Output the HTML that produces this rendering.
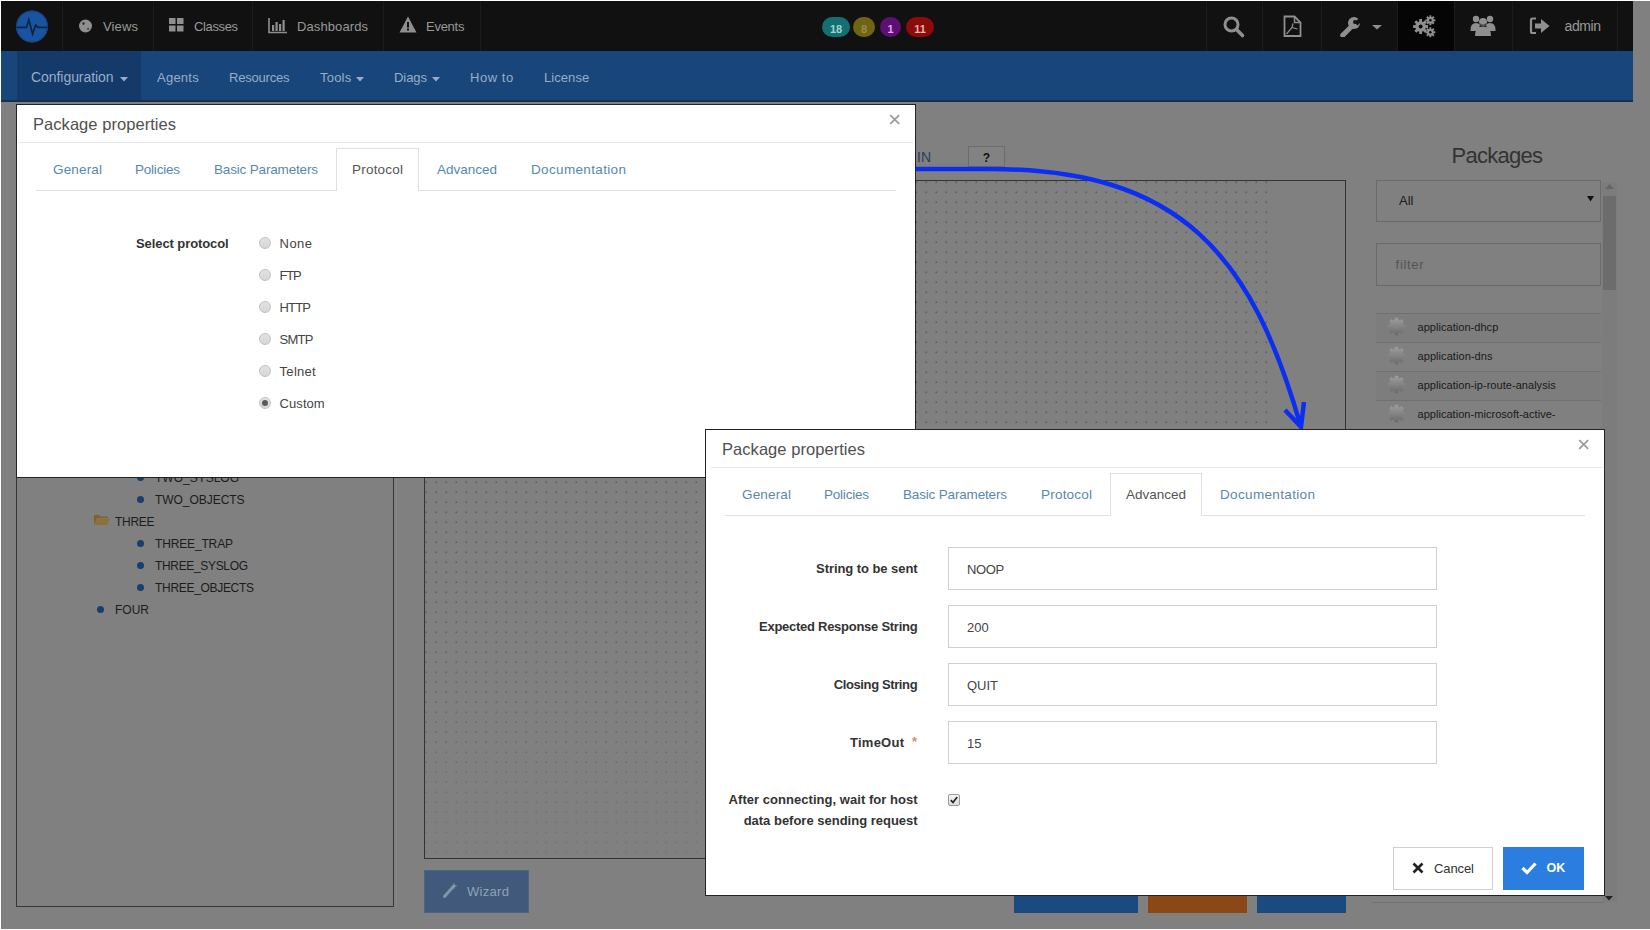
<!DOCTYPE html>
<html><head><meta charset="utf-8"><title>Package properties</title>
<style>
html,body{margin:0;padding:0;background:#fff;width:1650px;height:930px;overflow:hidden;position:relative}
body{font-family:"Liberation Sans", sans-serif}
body>div,body>span{position:absolute}
.t{position:absolute;white-space:nowrap;line-height:1;font-family:"Liberation Sans", sans-serif}
svg{position:absolute}
</style></head><body>
<div style="left:1px;top:1px;width:1649px;height:928px;background:#808080"></div>
<div style="left:1px;top:1px;width:1632px;height:50px;background:#111"></div>
<div style="left:62px;top:1px;width:1px;height:50px;background:#1c1c1c"></div>
<div style="left:153px;top:1px;width:1px;height:50px;background:#1c1c1c"></div>
<div style="left:252px;top:1px;width:1px;height:50px;background:#1c1c1c"></div>
<div style="left:383px;top:1px;width:1px;height:50px;background:#1c1c1c"></div>
<div style="left:480px;top:1px;width:1px;height:50px;background:#1c1c1c"></div>
<div style="left:1206px;top:1px;width:1px;height:50px;background:#1c1c1c"></div>
<div style="left:1262px;top:1px;width:1px;height:50px;background:#1c1c1c"></div>
<div style="left:1321px;top:1px;width:1px;height:50px;background:#1c1c1c"></div>
<div style="left:1397px;top:1px;width:1px;height:50px;background:#1c1c1c"></div>
<div style="left:1454px;top:1px;width:1px;height:50px;background:#1c1c1c"></div>
<div style="left:1512px;top:1px;width:1px;height:50px;background:#1c1c1c"></div>
<div style="left:1617px;top:1px;width:1px;height:50px;background:#1c1c1c"></div>
<div style="left:1398px;top:1px;width:56px;height:50px;background:#050505"></div>
<div style="left:1px;top:51px;width:1632px;height:51px;background:#18467b"></div>
<div style="left:17px;top:51px;width:124px;height:51px;background:#133a69"></div>
<div style="left:1px;top:100px;width:1632px;height:2px;background:#142f50"></div>
<svg style="position:absolute;left:14px;top:8px" width="38" height="38" viewBox="0 0 38 38">
<circle cx="18" cy="18.5" r="16" fill="#1a54a0"/><circle cx="18" cy="18.5" r="15.5" fill="none" stroke="#14427e" stroke-width="1"/>
<path d="M2.5 19.3 H12.5 L14.8 11.7 L18.6 26 L21.6 17 L23.9 19.3 H33.5" fill="none" stroke="#0b2348" stroke-width="1.7" stroke-linejoin="miter"/>
</svg>
<svg style="position:absolute;left:78px;top:18px" width="16" height="16" viewBox="0 0 16 16">
<circle cx="7.5" cy="8" r="6.5" fill="#8f8f8f"/><path d="M4 5 Q6 3.5 7 5 L6 7 Q4.5 7.5 4 5Z M8.5 11 L10.5 9.5 L11 12 Z" fill="#333"/></svg>
<span class="t" style="left:103.00px;top:20.00px;font-size:13px;color:#999;letter-spacing:0.137px;">Views</span>
<svg style="position:absolute;left:169px;top:18px" width="16" height="14" viewBox="0 0 16 14">
<rect x="0" y="0" width="6.5" height="6" fill="#8f8f8f"/><rect x="8" y="0" width="6.5" height="6" fill="#8f8f8f"/>
<rect x="0" y="7.5" width="6.5" height="6" fill="#8f8f8f"/><rect x="8" y="7.5" width="6.5" height="6" fill="#8f8f8f"/></svg>
<span class="t" style="left:194.00px;top:20.00px;font-size:13px;color:#999;letter-spacing:-0.375px;">Classes</span>
<svg style="position:absolute;left:268px;top:17px" width="20" height="17" viewBox="0 0 20 17">
<path d="M1 1 V15.5 H19" fill="none" stroke="#8f8f8f" stroke-width="1.6"/>
<rect x="4" y="8" width="2.2" height="6" fill="#8f8f8f"/><rect x="7.5" y="5" width="2.2" height="9" fill="#8f8f8f"/>
<rect x="11" y="7" width="2.2" height="7" fill="#8f8f8f"/><rect x="14.5" y="3" width="2.2" height="11" fill="#8f8f8f"/></svg>
<span class="t" style="left:297.00px;top:20.00px;font-size:13px;color:#999;letter-spacing:0.099px;">Dashboards</span>
<svg style="position:absolute;left:399px;top:16px" width="18" height="17" viewBox="0 0 18 17">
<path d="M9 0.5 L17.5 16.5 H0.5 Z" fill="#8f8f8f"/><rect x="8" y="6" width="2" height="5.5" fill="#111"/><rect x="8" y="12.5" width="2" height="2" fill="#111"/></svg>
<span class="t" style="left:426.00px;top:20.00px;font-size:13px;color:#999;letter-spacing:-0.270px;">Events</span>
<div style="left:822px;top:17px;width:28px;height:20px;border-radius:10px;background:#137070"></div>
<span class="t" style="left:822px;width:28px;text-align:center;top:23.69px;font-size:11px;font-weight:700;color:#a8d0d0">18</span>
<div style="left:853px;top:17px;width:22px;height:20px;border-radius:10px;background:#6f6414"></div>
<span class="t" style="left:853px;width:22px;text-align:center;top:23.69px;font-size:11px;font-weight:700;color:#9a8c48">8</span>
<div style="left:880px;top:17px;width:21px;height:20px;border-radius:10px;background:#5e0f73"></div>
<span class="t" style="left:880px;width:21px;text-align:center;top:23.69px;font-size:11px;font-weight:700;color:#d8a8e8">1</span>
<div style="left:906px;top:17px;width:28px;height:20px;border-radius:10px;background:#8c0b0b"></div>
<span class="t" style="left:906px;width:28px;text-align:center;top:23.69px;font-size:11px;font-weight:700;color:#e8b0b0">11</span>
<svg style="position:absolute;left:1222px;top:15px" width="24" height="24" viewBox="0 0 24 24">
<circle cx="9.5" cy="9.5" r="6.5" fill="none" stroke="#8f8f8f" stroke-width="3"/><path d="M14.5 14.5 L20.5 20.5" stroke="#8f8f8f" stroke-width="3.6" stroke-linecap="round"/></svg>
<svg style="position:absolute;left:1283px;top:15px" width="20" height="23" viewBox="0 0 20 23">
<path d="M1.5 1.5 H11.5 L17.5 7.5 V21 H1.5 Z" fill="none" stroke="#8f8f8f" stroke-width="1.8"/><path d="M11.5 1.5 V7.5 H17.5" fill="none" stroke="#8f8f8f" stroke-width="1.5"/>
<path d="M3.5 19 L9 12.5 L10 8.5 M9 12.5 L14.5 14" fill="none" stroke="#8f8f8f" stroke-width="1.2"/></svg>
<svg style="position:absolute;left:1339px;top:16px" width="22" height="21" viewBox="0 0 22 21">
<defs><mask id="wm"><rect width="22" height="21" fill="#fff"/><path d="M15.5 6.5 L21 1 L24 4 L18.5 9.5Z" fill="#000"/><circle cx="16" cy="6" r="2" fill="#000"/></mask></defs>
<g mask="url(#wm)" fill="#8f8f8f"><circle cx="15" cy="7" r="6"/><path d="M2 17.5 L11 8.5 L14.5 12 L5.5 21Z"/><circle cx="3.7" cy="19.3" r="2.5"/></g></svg>
<svg style="position:absolute;left:1372px;top:25px" width="11" height="5" viewBox="0 0 11 5"><path d="M0 0 H10 L5 4.5Z" fill="#8f8f8f"/></svg>
<svg style="position:absolute;left:1413px;top:15px" width="25" height="23" viewBox="0 0 28 26">
<g fill="#8f8f8f">
<circle cx="8.5" cy="13" r="6"/>
<g transform="translate(8.5 13)"><rect x="-1.6" y="-8.5" width="3.2" height="4" transform="rotate(0)"/><rect x="-1.6" y="-8.5" width="3.2" height="4" transform="rotate(45)"/><rect x="-1.6" y="-8.5" width="3.2" height="4" transform="rotate(90)"/><rect x="-1.6" y="-8.5" width="3.2" height="4" transform="rotate(135)"/><rect x="-1.6" y="-8.5" width="3.2" height="4" transform="rotate(180)"/><rect x="-1.6" y="-8.5" width="3.2" height="4" transform="rotate(225)"/><rect x="-1.6" y="-8.5" width="3.2" height="4" transform="rotate(270)"/><rect x="-1.6" y="-8.5" width="3.2" height="4" transform="rotate(315)"/></g>
<circle cx="19.5" cy="6" r="3.8"/>
<g transform="translate(19.5 6)"><rect x="-1.1" y="-5.6" width="2.2" height="3" transform="rotate(0)"/><rect x="-1.1" y="-5.6" width="2.2" height="3" transform="rotate(45)"/><rect x="-1.1" y="-5.6" width="2.2" height="3" transform="rotate(90)"/><rect x="-1.1" y="-5.6" width="2.2" height="3" transform="rotate(135)"/><rect x="-1.1" y="-5.6" width="2.2" height="3" transform="rotate(180)"/><rect x="-1.1" y="-5.6" width="2.2" height="3" transform="rotate(225)"/><rect x="-1.1" y="-5.6" width="2.2" height="3" transform="rotate(270)"/><rect x="-1.1" y="-5.6" width="2.2" height="3" transform="rotate(315)"/></g>
<circle cx="19.5" cy="19.5" r="3.8"/>
<g transform="translate(19.5 19.5)"><rect x="-1.1" y="-5.6" width="2.2" height="3" transform="rotate(0)"/><rect x="-1.1" y="-5.6" width="2.2" height="3" transform="rotate(45)"/><rect x="-1.1" y="-5.6" width="2.2" height="3" transform="rotate(90)"/><rect x="-1.1" y="-5.6" width="2.2" height="3" transform="rotate(135)"/><rect x="-1.1" y="-5.6" width="2.2" height="3" transform="rotate(180)"/><rect x="-1.1" y="-5.6" width="2.2" height="3" transform="rotate(225)"/><rect x="-1.1" y="-5.6" width="2.2" height="3" transform="rotate(270)"/><rect x="-1.1" y="-5.6" width="2.2" height="3" transform="rotate(315)"/></g>
</g>
<circle cx="8.5" cy="13" r="2.2" fill="#050505"/><circle cx="19.5" cy="6" r="1.4" fill="#050505"/><circle cx="19.5" cy="19.5" r="1.4" fill="#050505"/></svg>
<svg style="position:absolute;left:1470px;top:14px" width="26" height="24" viewBox="0 0 26 24">
<g fill="#8f8f8f"><circle cx="6" cy="5" r="3.2"/><circle cx="20" cy="5" r="3.2"/><path d="M0.5 16 Q0.5 9 6 9 Q9 9 10 11 L8 17 H0.5Z"/><path d="M25.5 16 Q25.5 9 20 9 Q17 9 16 11 L18 17 H25.5Z"/>
<circle cx="13" cy="8" r="4"/><path d="M5 22 Q5 12.5 13 12.5 Q21 12.5 21 22 Z"/></g>
<path d="M9.5 9.5 Q13 13 16.5 9.5" stroke="#111" stroke-width="0.8" fill="none"/></svg>
<svg style="position:absolute;left:1529px;top:16px" width="24" height="20" viewBox="0 0 24 20">
<path d="M7 2.5 H3.5 Q2 2.5 2 4 V15.5 Q2 17 3.5 17 H7" fill="none" stroke="#8f8f8f" stroke-width="2.2"/>
<path d="M6 7.5 H12 V3 L20.5 10 L12 17 V12.5 H6 Z" fill="#8f8f8f"/></svg>
<span class="t" style="left:1564.50px;top:18.85px;font-size:14px;color:#999;letter-spacing:-0.410px;">admin</span>
<span class="t" style="left:31.00px;top:70.15px;font-size:14px;color:#98adc6;letter-spacing:-0.057px;">Configuration</span>
<svg style="position:absolute;left:120px;top:77px" width="8" height="5" viewBox="0 0 8 5"><path d="M0 0 H8 L4 4.5Z" fill="#98adc6"/></svg>
<svg style="position:absolute;left:356px;top:77px" width="8" height="5" viewBox="0 0 8 5"><path d="M0 0 H8 L4 4.5Z" fill="#98adc6"/></svg>
<svg style="position:absolute;left:432px;top:77px" width="8" height="5" viewBox="0 0 8 5"><path d="M0 0 H8 L4 4.5Z" fill="#98adc6"/></svg>
<span class="t" style="left:157.00px;top:71.00px;font-size:13px;color:#98adc6;letter-spacing:0.243px;">Agents</span>
<span class="t" style="left:229.00px;top:71.00px;font-size:13px;color:#98adc6;letter-spacing:-0.205px;">Resources</span>
<span class="t" style="left:320.00px;top:71.00px;font-size:13px;color:#98adc6;letter-spacing:0.210px;">Tools</span>
<span class="t" style="left:394.00px;top:71.00px;font-size:13px;color:#98adc6;letter-spacing:-0.062px;">Diags</span>
<span class="t" style="left:470.00px;top:71.00px;font-size:13px;color:#98adc6;letter-spacing:0.546px;">How to</span>
<span class="t" style="left:544.00px;top:71.00px;font-size:13px;color:#98adc6;letter-spacing:0.065px;">License</span>
<div style="left:16px;top:150px;width:377px;height:756px;border:1px solid #363636;box-sizing:border-box;width:378px;height:757px"></div>
<div style="left:396px;top:150px;width:1px;height:757px;background:#888"></div>
<div style="left:136.5px;top:474.0px;width:7px;height:7px;border-radius:4px;background:#173f6e"></div>
<span class="t" style="left:155.00px;top:471.84px;font-size:12px;color:#1c1c1c;letter-spacing:-0.003px;">TWO_SYSLOG</span>
<div style="left:136.5px;top:496.0px;width:7px;height:7px;border-radius:4px;background:#173f6e"></div>
<span class="t" style="left:155.00px;top:493.84px;font-size:12px;color:#1c1c1c;letter-spacing:-0.042px;">TWO_OBJECTS</span>
<span class="t" style="left:115.00px;top:515.84px;font-size:12px;color:#1c1c1c;letter-spacing:-0.293px;">THREE</span>
<div style="left:136.5px;top:540.0px;width:7px;height:7px;border-radius:4px;background:#173f6e"></div>
<span class="t" style="left:155.00px;top:537.84px;font-size:12px;color:#1c1c1c;letter-spacing:-0.151px;">THREE_TRAP</span>
<div style="left:136.5px;top:562.0px;width:7px;height:7px;border-radius:4px;background:#173f6e"></div>
<span class="t" style="left:155.00px;top:559.84px;font-size:12px;color:#1c1c1c;letter-spacing:-0.337px;">THREE_SYSLOG</span>
<div style="left:136.5px;top:584.0px;width:7px;height:7px;border-radius:4px;background:#173f6e"></div>
<span class="t" style="left:155.00px;top:581.84px;font-size:12px;color:#1c1c1c;letter-spacing:-0.307px;">THREE_OBJECTS</span>
<div style="left:96.5px;top:606.0px;width:7px;height:7px;border-radius:4px;background:#173f6e"></div>
<span class="t" style="left:115.00px;top:603.84px;font-size:12px;color:#1c1c1c;letter-spacing:0.000px;">FOUR</span>
<svg style="position:absolute;left:94px;top:514px" width="16" height="12" viewBox="0 0 16 12"><path d="M0 1 H5 L6.5 2.5 H14 V4 H3 L0 11Z" fill="#7a6530"/><path d="M3 4.5 H16 L13.5 11 H0Z" fill="#8a7238"/></svg>
<div style="left:424px;top:180px;width:922px;height:679px;border:1px solid #333;box-sizing:border-box"></div>
<svg style="position:absolute;left:425px;top:181px" width="920" height="677" viewBox="0 0 920 677"><defs><pattern id="dp" width="10" height="10" patternUnits="userSpaceOnUse"><rect x="0.5" y="0.5" width="1.6" height="1.6" fill="#5c5c5c"/></pattern><linearGradient id="dfade" x1="0" y1="0" x2="0" y2="1"><stop offset="0" stop-color="#fff"/><stop offset="0.6" stop-color="#fff"/><stop offset="1" stop-color="#555"/></linearGradient><mask id="dm"><rect width="843" height="677" fill="url(#dfade)"/></mask></defs><rect width="843" height="677" fill="url(#dp)" mask="url(#dm)"/></svg>
<span class="t" style="left:917.00px;top:150.15px;font-size:14px;color:#2c3d5c;">IN</span>
<div style="left:968px;top:146px;width:37px;height:21px;border:1px solid #6c6c6c;box-sizing:border-box;background:#828282"></div>
<span class="t" style="left:968.00px;top:151.84px;font-size:12px;color:#111;font-weight:700;width:37px;text-align:center">?</span>
<div style="left:424px;top:870px;width:105px;height:43px;background:#41597a;border:1px solid #4d6584;box-sizing:border-box"></div>
<svg style="position:absolute;left:442px;top:881px" width="18" height="18" viewBox="0 0 18 18"><path d="M2.5 15.5 L10.5 6.5" stroke="#7f95aa" stroke-width="3" stroke-linecap="round"/><path d="M12 1.5 L12.8 4.2 L15.5 5 L12.8 5.8 L12 8.5 L11.2 5.8 L8.5 5 L11.2 4.2Z" fill="#8a9fb3"/></svg>
<span class="t" style="left:467.00px;top:885.00px;font-size:13px;color:#8ea2b8;letter-spacing:0.309px;">Wizard</span>
<div style="left:1014px;top:880px;width:124px;height:33px;background:#1b4a80"></div>
<div style="left:1148px;top:880px;width:99px;height:33px;background:#8a4816"></div>
<div style="left:1257px;top:880px;width:89px;height:33px;background:#1b4a80"></div>
<span class="t" style="left:1451.50px;top:145.38px;font-size:22px;color:#333;letter-spacing:-0.732px;">Packages</span>
<div style="left:1376px;top:180px;width:225px;height:42px;border:1px solid #6a6a6a;box-sizing:border-box"></div>
<span class="t" style="left:1399.00px;top:194.00px;font-size:13px;color:#1a1a1a;">All</span>
<svg style="position:absolute;left:1587px;top:196px" width="7" height="6" viewBox="0 0 7 6"><path d="M0 0 H7 L3.5 5.5Z" fill="#111"/></svg>
<div style="left:1376px;top:243px;width:225px;height:43px;border:1px solid #6a6a6a;box-sizing:border-box"></div>
<span class="t" style="left:1395.60px;top:258.00px;font-size:13px;color:#545454;letter-spacing:0.688px;">filter</span>
<div style="left:1602px;top:182px;width:15px;height:720px;background:#7c7c7c"></div>
<div style="left:1603px;top:196px;width:13px;height:94px;background:#6c6c6c"></div>
<svg style="position:absolute;left:1605px;top:184px" width="9" height="6" viewBox="0 0 9 6"><path d="M0 5 H9 L4.5 0Z" fill="#666"/></svg>
<svg style="position:absolute;left:1605px;top:896px" width="8" height="5" viewBox="0 0 8 5"><path d="M0 0 H8 L4 4.5Z" fill="#222"/></svg>
<div style="left:1376px;top:314px;width:225px;height:28px;background:#7d7d7d"></div>
<div style="left:1376px;top:372px;width:225px;height:28px;background:#7d7d7d"></div>
<div style="left:1376px;top:313px;width:225px;height:1px;background:#707070"></div>
<div style="left:1376px;top:342px;width:225px;height:1px;background:#707070"></div>
<div style="left:1376px;top:371px;width:225px;height:1px;background:#707070"></div>
<div style="left:1376px;top:400px;width:225px;height:1px;background:#707070"></div>
<svg style="position:absolute;left:1387px;top:317px" width="19" height="19" viewBox="-9.5 -9.5 19 19"><defs><linearGradient id="gg0" x1="0" y1="0" x2="0" y2="1"><stop offset="0" stop-color="#9e9e9e"/><stop offset="1" stop-color="#6a6a6a"/></linearGradient></defs><path d="M-2.00 -6.50 L-1.58 -8.86 L1.58 -8.86 L2.00 -6.50 L3.18 -6.01 L5.15 -7.38 L7.38 -5.15 L6.01 -3.18 L6.50 -2.00 L8.86 -1.58 L8.86 1.58 L6.50 2.00 L6.01 3.18 L7.38 5.15 L5.15 7.38 L3.18 6.01 L2.00 6.50 L1.58 8.86 L-1.58 8.86 L-2.00 6.50 L-3.18 6.01 L-5.15 7.38 L-7.38 5.15 L-6.01 3.18 L-6.50 2.00 L-8.86 1.58 L-8.86 -1.58 L-6.50 -2.00 L-6.01 -3.18 L-7.38 -5.15 L-5.15 -7.38 L-3.18 -6.01Z" fill="url(#gg0)"/><circle r="2" fill="#858585"/></svg>
<span class="t" style="left:1417.50px;top:321.69px;font-size:11px;color:#1a1a1a;letter-spacing:0.045px;">application-dhcp</span>
<svg style="position:absolute;left:1387px;top:346px" width="19" height="19" viewBox="-9.5 -9.5 19 19"><defs><linearGradient id="gg1" x1="0" y1="0" x2="0" y2="1"><stop offset="0" stop-color="#9e9e9e"/><stop offset="1" stop-color="#6a6a6a"/></linearGradient></defs><path d="M-2.00 -6.50 L-1.58 -8.86 L1.58 -8.86 L2.00 -6.50 L3.18 -6.01 L5.15 -7.38 L7.38 -5.15 L6.01 -3.18 L6.50 -2.00 L8.86 -1.58 L8.86 1.58 L6.50 2.00 L6.01 3.18 L7.38 5.15 L5.15 7.38 L3.18 6.01 L2.00 6.50 L1.58 8.86 L-1.58 8.86 L-2.00 6.50 L-3.18 6.01 L-5.15 7.38 L-7.38 5.15 L-6.01 3.18 L-6.50 2.00 L-8.86 1.58 L-8.86 -1.58 L-6.50 -2.00 L-6.01 -3.18 L-7.38 -5.15 L-5.15 -7.38 L-3.18 -6.01Z" fill="url(#gg1)"/><circle r="2" fill="#858585"/></svg>
<span class="t" style="left:1417.50px;top:350.69px;font-size:11px;color:#1a1a1a;letter-spacing:0.071px;">application-dns</span>
<svg style="position:absolute;left:1387px;top:375px" width="19" height="19" viewBox="-9.5 -9.5 19 19"><defs><linearGradient id="gg2" x1="0" y1="0" x2="0" y2="1"><stop offset="0" stop-color="#9e9e9e"/><stop offset="1" stop-color="#6a6a6a"/></linearGradient></defs><path d="M-2.00 -6.50 L-1.58 -8.86 L1.58 -8.86 L2.00 -6.50 L3.18 -6.01 L5.15 -7.38 L7.38 -5.15 L6.01 -3.18 L6.50 -2.00 L8.86 -1.58 L8.86 1.58 L6.50 2.00 L6.01 3.18 L7.38 5.15 L5.15 7.38 L3.18 6.01 L2.00 6.50 L1.58 8.86 L-1.58 8.86 L-2.00 6.50 L-3.18 6.01 L-5.15 7.38 L-7.38 5.15 L-6.01 3.18 L-6.50 2.00 L-8.86 1.58 L-8.86 -1.58 L-6.50 -2.00 L-6.01 -3.18 L-7.38 -5.15 L-5.15 -7.38 L-3.18 -6.01Z" fill="url(#gg2)"/><circle r="2" fill="#858585"/></svg>
<span class="t" style="left:1417.50px;top:379.69px;font-size:11px;color:#1a1a1a;letter-spacing:0.044px;">application-ip-route-analysis</span>
<svg style="position:absolute;left:1387px;top:404px" width="19" height="19" viewBox="-9.5 -9.5 19 19"><defs><linearGradient id="gg3" x1="0" y1="0" x2="0" y2="1"><stop offset="0" stop-color="#9e9e9e"/><stop offset="1" stop-color="#6a6a6a"/></linearGradient></defs><path d="M-2.00 -6.50 L-1.58 -8.86 L1.58 -8.86 L2.00 -6.50 L3.18 -6.01 L5.15 -7.38 L7.38 -5.15 L6.01 -3.18 L6.50 -2.00 L8.86 -1.58 L8.86 1.58 L6.50 2.00 L6.01 3.18 L7.38 5.15 L5.15 7.38 L3.18 6.01 L2.00 6.50 L1.58 8.86 L-1.58 8.86 L-2.00 6.50 L-3.18 6.01 L-5.15 7.38 L-7.38 5.15 L-6.01 3.18 L-6.50 2.00 L-8.86 1.58 L-8.86 -1.58 L-6.50 -2.00 L-6.01 -3.18 L-7.38 -5.15 L-5.15 -7.38 L-3.18 -6.01Z" fill="url(#gg3)"/><circle r="2" fill="#858585"/></svg>
<span class="t" style="left:1417.50px;top:408.69px;font-size:11px;color:#1a1a1a;letter-spacing:0.038px;">application-microsoft-active-</span>
<div style="left:1372px;top:902px;width:232px;height:1px;background:#727272"></div>
<svg style="position:absolute;left:0;top:0" width="1650" height="930" viewBox="0 0 1650 930">
<path d="M915 169 H990 C1182 169 1252 256 1301 427" fill="none" stroke="#0c2ef2" stroke-width="4.5"/>
<path d="M1285 410 L1301 427 L1304 402" fill="none" stroke="#0c2ef2" stroke-width="4.5" stroke-linejoin="miter"/>
</svg>
<div style="left:16px;top:104px;width:900px;height:374px;background:#fff;border:1px solid #222;box-sizing:border-box"></div>
<span class="t" style="left:33.00px;top:115.83px;font-size:16.5px;color:#505050;letter-spacing:0.049px;">Package properties</span>
<svg style="position:absolute;left:888px;top:113px" width="14" height="13" viewBox="0 0 14 13"><path d="M2.2 2.2 L11.2 10.8 M11.2 2.2 L2.2 10.8" stroke="#9c9c9c" stroke-width="1.8"/></svg>
<div style="left:18px;top:142px;width:895px;height:1px;background:#e6e6e6"></div>
<div style="left:36px;top:190px;width:860px;height:1px;background:#e0e0e0"></div>
<span class="t" style="left:53.00px;top:163.07px;font-size:13.5px;color:#5689ad;letter-spacing:0.161px;">General</span>
<span class="t" style="left:135.00px;top:163.07px;font-size:13.5px;color:#5689ad;letter-spacing:-0.219px;">Policies</span>
<span class="t" style="left:214.00px;top:163.07px;font-size:13.5px;color:#5689ad;letter-spacing:-0.170px;">Basic Parameters</span>
<div style="left:336px;top:148px;width:83px;height:43px;background:#fff;border:1px solid #e0e0e0;border-bottom:none;box-sizing:border-box"></div>
<span class="t" style="left:352.00px;top:163.07px;font-size:13.5px;color:#555;letter-spacing:0.210px;">Protocol</span>
<span class="t" style="left:437.00px;top:163.07px;font-size:13.5px;color:#5689ad;letter-spacing:-0.007px;">Advanced</span>
<span class="t" style="left:531.00px;top:163.07px;font-size:13.5px;color:#5689ad;letter-spacing:0.349px;">Documentation</span>
<span class="t" style="right:1421.30px;top:237.00px;font-size:13px;color:#333;font-weight:700;letter-spacing:-0.087px;margin-right:0.087px;">Select protocol</span>
<div style="left:259px;top:237.2px;width:12px;height:12px;border-radius:6px;box-sizing:border-box;border:1px solid #c2c2c2;background:linear-gradient(#e4e4e4,#d4d4d4)"></div>
<span class="t" style="left:279.60px;top:237.00px;font-size:13px;color:#444;letter-spacing:0.407px;">None</span>
<div style="left:259px;top:269.2px;width:12px;height:12px;border-radius:6px;box-sizing:border-box;border:1px solid #c2c2c2;background:linear-gradient(#e4e4e4,#d4d4d4)"></div>
<span class="t" style="left:279.60px;top:269.00px;font-size:13px;color:#444;letter-spacing:-1.281px;">FTP</span>
<div style="left:259px;top:301.2px;width:12px;height:12px;border-radius:6px;box-sizing:border-box;border:1px solid #c2c2c2;background:linear-gradient(#e4e4e4,#d4d4d4)"></div>
<span class="t" style="left:279.60px;top:301.00px;font-size:13px;color:#444;letter-spacing:-0.884px;">HTTP</span>
<div style="left:259px;top:333.2px;width:12px;height:12px;border-radius:6px;box-sizing:border-box;border:1px solid #c2c2c2;background:linear-gradient(#e4e4e4,#d4d4d4)"></div>
<span class="t" style="left:279.60px;top:333.00px;font-size:13px;color:#444;letter-spacing:-0.775px;">SMTP</span>
<div style="left:259px;top:365.2px;width:12px;height:12px;border-radius:6px;box-sizing:border-box;border:1px solid #c2c2c2;background:linear-gradient(#e4e4e4,#d4d4d4)"></div>
<span class="t" style="left:279.60px;top:365.00px;font-size:13px;color:#444;letter-spacing:0.279px;">Telnet</span>
<div style="left:259px;top:397.2px;width:12px;height:12px;border-radius:6px;box-sizing:border-box;border:1px solid #c2c2c2;background:linear-gradient(#e4e4e4,#d4d4d4)"></div>
<div style="left:262px;top:400.2px;width:6px;height:6px;border-radius:3px;background:#5a5a5a"></div>
<span class="t" style="left:279.60px;top:397.00px;font-size:13px;color:#444;letter-spacing:0.061px;">Custom</span>
<div style="left:705px;top:429px;width:900px;height:467px;background:#fff;border:1px solid #222;box-sizing:border-box"></div>
<span class="t" style="left:722.00px;top:440.83px;font-size:16.5px;color:#505050;letter-spacing:0.049px;">Package properties</span>
<svg style="position:absolute;left:1577px;top:438px" width="14" height="13" viewBox="0 0 14 13"><path d="M2.2 2.2 L11.2 10.8 M11.2 2.2 L2.2 10.8" stroke="#9c9c9c" stroke-width="1.8"/></svg>
<div style="left:711px;top:467px;width:891px;height:1px;background:#e6e6e6"></div>
<div style="left:725px;top:515px;width:860px;height:1px;background:#e0e0e0"></div>
<span class="t" style="left:742.00px;top:488.07px;font-size:13.5px;color:#5689ad;letter-spacing:0.161px;">General</span>
<span class="t" style="left:824.00px;top:488.07px;font-size:13.5px;color:#5689ad;letter-spacing:-0.219px;">Policies</span>
<span class="t" style="left:903.00px;top:488.07px;font-size:13.5px;color:#5689ad;letter-spacing:-0.170px;">Basic Parameters</span>
<span class="t" style="left:1041.00px;top:488.07px;font-size:13.5px;color:#5689ad;letter-spacing:0.210px;">Protocol</span>
<div style="left:1110px;top:473px;width:92px;height:43px;background:#fff;border:1px solid #e0e0e0;border-bottom:none;box-sizing:border-box"></div>
<span class="t" style="left:1126.00px;top:488.07px;font-size:13.5px;color:#555;letter-spacing:-0.007px;">Advanced</span>
<span class="t" style="left:1220.00px;top:488.07px;font-size:13.5px;color:#5689ad;letter-spacing:0.349px;">Documentation</span>
<span class="t" style="right:732.40px;top:562.00px;font-size:13px;color:#333;font-weight:700;letter-spacing:-0.060px;margin-right:0.060px;">String to be sent</span>
<div style="left:948px;top:547px;width:489px;height:43px;border:1px solid #cfcfcf;box-sizing:border-box;background:#fff"></div>
<span class="t" style="left:967.00px;top:563.00px;font-size:13px;color:#444;letter-spacing:-0.366px;">NOOP</span>
<span class="t" style="right:732.40px;top:620.00px;font-size:13px;color:#333;font-weight:700;letter-spacing:-0.266px;margin-right:0.266px;">Expected Response String</span>
<div style="left:948px;top:605px;width:489px;height:43px;border:1px solid #cfcfcf;box-sizing:border-box;background:#fff"></div>
<span class="t" style="left:967.00px;top:621.00px;font-size:13px;color:#444;">200</span>
<span class="t" style="right:732.40px;top:678.00px;font-size:13px;color:#333;font-weight:700;letter-spacing:-0.373px;margin-right:0.373px;">Closing String</span>
<div style="left:948px;top:663px;width:489px;height:43px;border:1px solid #cfcfcf;box-sizing:border-box;background:#fff"></div>
<span class="t" style="left:967.00px;top:679.00px;font-size:13px;color:#444;">QUIT</span>
<span class="t" style="right:746.00px;top:736.00px;font-size:13px;color:#333;font-weight:700;letter-spacing:0.250px;margin-right:-0.250px;">TimeOut</span>
<span class="t" style="left:912.00px;top:734.50px;font-size:13px;color:#d89060;font-weight:700;">*</span>
<div style="left:948px;top:721px;width:489px;height:43px;border:1px solid #cfcfcf;box-sizing:border-box;background:#fff"></div>
<span class="t" style="left:967.00px;top:737.00px;font-size:13px;color:#444;">15</span>
<span class="t" style="right:732.40px;top:793.00px;font-size:13px;color:#333;font-weight:700;letter-spacing:0.040px;margin-right:-0.040px;">After connecting, wait for host</span>
<span class="t" style="right:732.40px;top:814.00px;font-size:13px;color:#333;font-weight:700;letter-spacing:-0.004px;margin-right:0.004px;">data before sending request</span>
<div style="left:948px;top:794px;width:12px;height:12px;box-sizing:border-box;border:1px solid #9a9a9a;border-radius:2px;background:linear-gradient(#f4f4f4,#dcdcdc)"></div>
<svg style="position:absolute;left:949px;top:795px" width="10" height="10" viewBox="0 0 10 10"><path d="M1.8 5.2 L4 7.5 L8.2 2" fill="none" stroke="#222" stroke-width="1.7"/></svg>
<div style="left:1393px;top:847px;width:100px;height:43px;background:#fff;border:1px solid #cfcfcf;box-sizing:border-box"></div>
<svg style="position:absolute;left:1412px;top:862px" width="12" height="12" viewBox="0 0 12 12"><path d="M1.5 1.5 L10.5 10.5 M10.5 1.5 L1.5 10.5" stroke="#222" stroke-width="2.6"/></svg>
<span class="t" style="left:1434.00px;top:861.50px;font-size:13px;color:#333;letter-spacing:-0.094px;">Cancel</span>
<div style="left:1503px;top:847px;width:81px;height:43px;background:#2b7de0"></div>
<svg style="position:absolute;left:1521px;top:861px" width="16" height="14" viewBox="0 0 16 14"><path d="M1.5 7 L6 11.5 L14.5 2.5" fill="none" stroke="#fff" stroke-width="3.2"/></svg>
<span class="t" style="left:1546.50px;top:861.92px;font-size:12.5px;color:#fff;font-weight:700;">OK</span>
</body></html>
